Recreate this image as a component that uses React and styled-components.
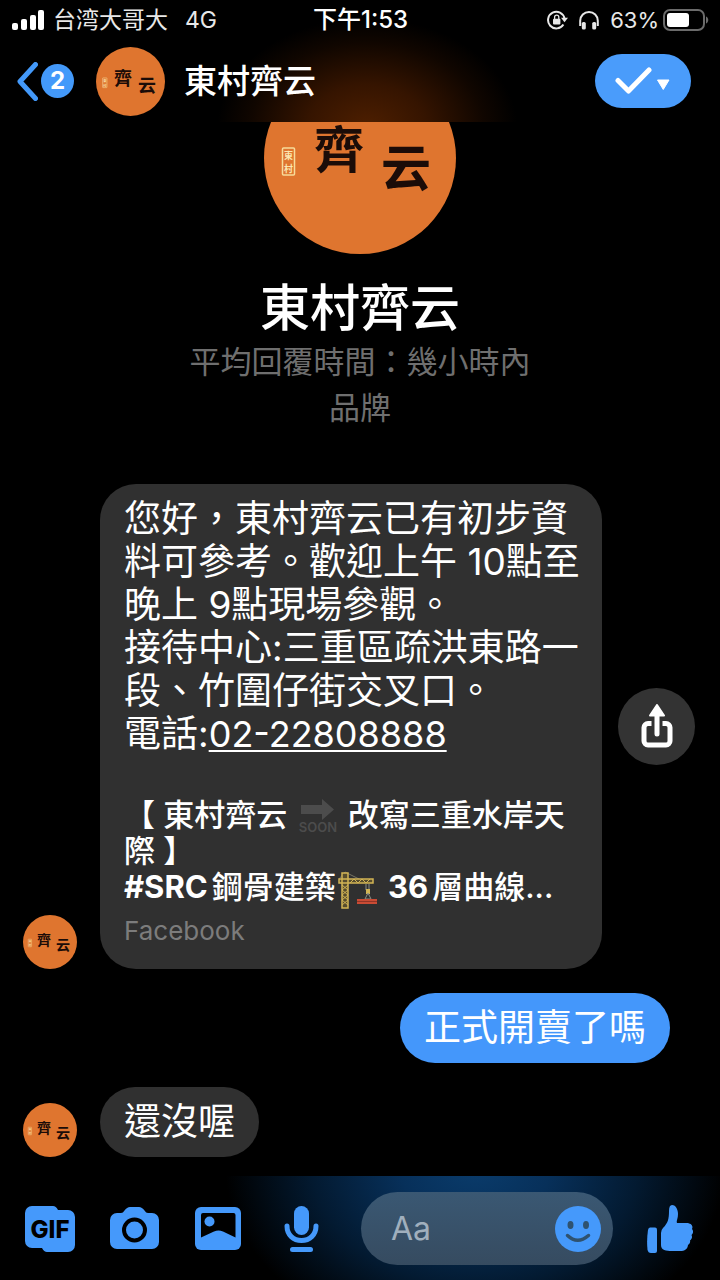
import React from "react";
import styled, { createGlobalStyle } from "styled-components";

const GlobalStyle = createGlobalStyle`
  * {
    box-sizing: border-box;
  }

  body {
    margin: 0;
    background-color: #000;
    color: #fff;
    font-family: Inter, "Noto Sans CJK TC", sans-serif;
  }

  button {
    padding: 0;
    border: none;
    background: none;
    color: inherit;
    font: inherit;
    cursor: pointer;
  }

  svg {
    display: block;
  }
`;

const Container = styled.div`
  min-height: 100vh;
  display: flex;
  flex-direction: column;
`;

const Header = styled.header`
  position: sticky;
  top: 0;
  z-index: 1;
  background: radial-gradient(ellipse 150px 110px at 51% 105%, #4e1f00 0%, #351400 40%, #100600 78%, #000 100%);
`;

const StatusBar = styled.div`
  height: 40px;
  padding: 0 11px 0 12px;
  display: grid;
  grid-template-columns: 1fr auto 1fr;
  align-items: center;
  font-size: 23px;
  line-height: 32px;
  color: #e8e8e8;
`;

const StatusGroup = styled.div`
  display: flex;
  align-items: center;
  justify-content: ${(props) => (props.$end ? "flex-end" : "flex-start")};
  gap: ${(props) => (props.$end ? "4px" : "9px")};
`;

const Network = styled.span`
  margin-left: 8px;
`;

const Time = styled.time`
  font-size: 24px;
  font-weight: 500;
  color: #fff;
`;

const Percent = styled.span`
  font-size: 22px;
`;

const StatusIcon = styled.span`
  margin-right: 7px;
`;

const NavBar = styled.div`
  height: 82px;
  padding: 0 29px 0 17px;
  display: flex;
  align-items: center;
`;

const BackButton = styled.button`
  display: flex;
  align-items: center;
  gap: 3px;
`;

const Badge = styled.span`
  width: 33px;
  height: 34px;
  border-radius: 50%;
  background-color: #4399fa;
  font-size: 24px;
  font-weight: 700;
  line-height: 34px;
`;

const PageName = styled.h1`
  flex: 1;
  margin: 0 0 0 19px;
  font-size: 33px;
  font-weight: 500;
  line-height: 44px;
`;

const NavAvatar = styled.span`
  margin-left: 22px;
`;

const DoneButton = styled.button`
  width: 96px;
  height: 54px;
  border-radius: 27px;
  background-color: #4a9cfb;
  display: flex;
  align-items: center;
  justify-content: center;
`;

const Chat = styled.main`
  flex: 1;
`;

const Profile = styled.section`
  display: flex;
  flex-direction: column;
  align-items: center;
  text-align: center;
`;

/* scrolled partly under the header */
const ProfilePicture = styled.div`
  margin-top: -60px;
`;

const ProfileName = styled.h2`
  margin: 23px 0 0;
  font-size: 50px;
  font-weight: 500;
  line-height: 62px;
`;

const ProfileInfo = styled.p`
  margin: 0;
  font-size: 31px;
  font-weight: 400;
  line-height: 46px;
  color: #6f6f6f;
`;

const Messages = styled.section`
  margin-top: 53px;
  padding: 0 25px 18px 23px;
  display: flex;
  flex-direction: column;
  gap: 24px;
`;

const Row = styled.div`
  padding-right: ${(props) => (props.$mine ? "25px" : "0")};
  display: flex;
  align-items: flex-end;
  justify-content: ${(props) => (props.$mine ? "flex-end" : "flex-start")};
`;

const Bubble = styled.div`
  flex: ${(props) => (props.$wide ? "1" : "none")};
  min-width: 0;
  margin-left: 23px;
  padding: 13px 24px 14px;
  border-radius: 36px;
  background-color: ${(props) => (props.$mine ? "#4497fb" : "#303030")};
  font-size: 37px;
  font-weight: 400;
  line-height: 43px;
`;

const Text = styled.p`
  margin: 0;
  white-space: nowrap;
`;

const Phone = styled.a`
  color: inherit;
  font-size: 36px;
  text-decoration-thickness: 2px;
  text-underline-offset: 3px;
`;

const CardTitle = styled.p`
  margin: 41px 0 0;
  font-size: 31px;
  font-weight: 500;
  line-height: 36px;
  white-space: nowrap;
`;

const Bold = styled.span`
  margin-right: 4px;
  font-weight: 700;
`;

const Emoji = styled.svg`
  display: inline-block;
  margin: -8px 2px;
  vertical-align: middle;
`;

const Source = styled.p`
  margin: 10px 0 8px;
  font-size: 26px;
  line-height: 32px;
  color: #7c7c7c;
`;

const ShareButton = styled.button`
  width: 77px;
  height: 77px;
  margin-left: 16px;
  flex: none;
  align-self: center;
  border-radius: 50%;
  background-color: #333;
  display: flex;
  align-items: center;
  justify-content: center;
`;

const Composer = styled.form`
  padding: 16px 27px 15px 25px;
  display: flex;
  align-items: center;
  gap: 34px;
  background: radial-gradient(ellipse 250px 185px at 66% -10%, #0a3c6c 0%, #07305a 30%, #031a31 65%, #000 100%);
`;

const ToolButton = styled.button`
  width: 50px;
  height: 50px;
  color: #4599fb;
  display: flex;
  align-items: center;
  justify-content: center;
`;

const LikeButton = styled(ToolButton)`
  width: 46px;
`;

const Field = styled.div`
  flex: 1;
  min-width: 0;
  height: 73px;
  padding: 0 12px 0 30px;
  border-radius: 37px;
  background: linear-gradient(#3a5873, #364b60);
  display: flex;
  align-items: center;
`;

const Input = styled.input`
  flex: 1;
  min-width: 0;
  padding: 0;
  border: none;
  outline: none;
  background: none;
  color: #fff;
  font-family: Inter, "Noto Sans CJK TC", sans-serif;
  font-size: 32px;

  &::placeholder {
    color: #a0afbd;
    opacity: 1;
  }
`;

const EmojiButton = styled(ToolButton)`
  width: 46px;
`;

const LogoText = styled.text`
  font-family: "Noto Sans CJK TC", sans-serif;
  font-weight: 700;
`;

const GifText = styled.text`
  font-family: Inter, sans-serif;
  font-size: 24px;
  font-weight: 800;
`;

const SoonText = styled.text`
  font-family: Inter, sans-serif;
  font-size: 13px;
  font-weight: 600;
`;

const Avatar = ({ size }) => (
  <svg width={size} height={size} viewBox="0 0 192 192" role="img" aria-label="東村齊云">
    <circle cx="96" cy="96" r="96" fill="#df752f" />
    <rect x="18.500" y="86" width="12" height="27" rx="1" fill="none" stroke="#f7dc9a" strokeWidth="1.500" />
    <LogoText x="20" y="97" fontSize="9" fill="#fbe6b0">東</LogoText>
    <LogoText x="20" y="110" fontSize="9" fill="#fbe6b0">村</LogoText>
    <LogoText x="50" y="106" fontSize="50" fill="#1b0c08">齊</LogoText>
    <LogoText x="117" y="124" fontSize="50" fill="#1b0c08">云</LogoText>
  </svg>
);

const SignalIcon = () => (
  <svg width="32" height="20" viewBox="0 0 32 20" fill="#fff">
    <rect x="0" y="13" width="6" height="7" rx="2" />
    <rect x="9" y="9" width="6" height="11" rx="2" />
    <rect x="18" y="5" width="6" height="15" rx="2" />
    <rect x="26" y="0" width="6" height="20" rx="2" />
  </svg>
);

const RotationLockIcon = () => (
  <svg width="21" height="20" viewBox="0 0 21 20" fill="none" stroke="#e8e8e8" strokeWidth="2">
    <path d="M17.500 8.500A8.300 8.300 0 1 0 16.400 14.500" />
    <path d="M14 7.800h7l-3.500 4.500z" fill="#e8e8e8" stroke="none" />
    <rect x="6" y="8.800" width="7.400" height="5.600" rx="1" fill="#e8e8e8" stroke="none" />
    <path d="M7.600 9V7.200a2.100 2.100 0 0 1 4.200 0V9" strokeWidth="1.300" />
  </svg>
);

const HeadphonesIcon = () => (
  <svg width="20" height="19" viewBox="0 0 20 19">
    <path d="M1.200 15V9.800a8.800 8.800 0 0 1 17.600 0V15" fill="none" stroke="#e8e8e8" strokeWidth="2" />
    <rect x="2.800" y="11" width="4" height="7.600" rx="1.600" fill="#e8e8e8" />
    <rect x="13.200" y="11" width="4" height="7.600" rx="1.600" fill="#e8e8e8" />
  </svg>
);

const BatteryIcon = () => (
  <svg width="46" height="22" viewBox="0 0 46 22">
    <rect x="1" y="1" width="40" height="20" rx="6" fill="none" stroke="#6b6b6b" strokeWidth="2" />
    <rect x="4" y="4" width="22" height="14" rx="3" fill="#fff" />
    <path d="M43 7.500c3 1.200 3 5.800 0 7z" fill="#6b6b6b" />
  </svg>
);

const BackIcon = () => (
  <svg width="21" height="39" viewBox="0 0 21 39">
    <path d="M18.500 2.500L3 19.500l15.500 17" fill="none" stroke="#4399fa" strokeWidth="5" strokeLinecap="round" strokeLinejoin="round" />
  </svg>
);

const DoneIcon = () => (
  <svg width="56" height="28" viewBox="0 0 56 28">
    <path d="M3 13.500L13.500 24 34 3" fill="none" stroke="#fff" strokeWidth="5" strokeLinecap="round" strokeLinejoin="round" />
    <path d="M42.500 13h11.500l-5.750 9.500z" fill="#fff" stroke="#fff" strokeLinejoin="round" />
  </svg>
);

const ShareIcon = () => (
  <svg width="32" height="46" viewBox="0 0 32 46">
    <path d="M10.500 19.500H7a4 4 0 0 0-4 4V37a4 4 0 0 0 4 4h18a4 4 0 0 0 4-4V23.500a4 4 0 0 0-4-4h-3.500" fill="none" stroke="#fff" strokeWidth="5" />
    <path d="M16 8v22" stroke="#fff" strokeWidth="5" strokeLinecap="round" />
    <path d="M16 1l7 10.500H9z" fill="#fff" stroke="#fff" strokeWidth="2" strokeLinejoin="round" />
  </svg>
);

const SoonEmoji = () => (
  <Emoji width="40" height="38" viewBox="0 0 40 38" fill="#4c4c4c" role="img" aria-label="soon">
    <path d="M3 6h21V0l12 10.500L24 21v-6H3z" />
    <SoonText x="20" y="33" textAnchor="middle">SOON</SoonText>
  </Emoji>
);

const CraneEmoji = () => (
  <Emoji width="40" height="38" viewBox="0 0 40 38" role="img" aria-label="building crane">
    <path d="M1 8L7 1l14 7" fill="none" stroke="#777464" />
    <path d="M4 37V2h6v35zM1 8h34v4H1z" fill="#574c2d" stroke="#d2b454" strokeWidth="1.500" />
    <path d="M4 14l6 5-6 5 6 5-6 5M10 14l-6 5 6 5-6 5 6 5M12 12l4-4 4 4 4-4 4 4 4-4" fill="none" stroke="#d2b454" />
    <path d="M28 13v6M31 13v6" stroke="#8c8e85" />
    <path d="M28 18h4v5h-4z" fill="#d2b454" />
    <path d="M30 22l-3 6h6z" fill="none" stroke="#8c8e85" />
    <rect x="19" y="28" width="20" height="5" fill="#c94b34" />
    <path d="M19 30.500h20" stroke="#913426" />
  </Emoji>
);

const GifIcon = () => (
  <svg width="50" height="46" viewBox="0 0 50 46">
    <path d="M7 0h21q3 0 5 4h10a7 7 0 0 1 7 7v28a7 7 0 0 1-7 7H22q-3 0-5-4H7a7 7 0 0 1-7-7V7a7 7 0 0 1 7-7z" fill="currentColor" />
    <GifText x="25" y="32" textAnchor="middle" fill="#000">GIF</GifText>
  </svg>
);

const CameraIcon = () => (
  <svg width="49" height="43" viewBox="0 0 49 43">
    <path d="M7 6h4q2 0 3.500-2.500Q17 0 20 0h9q3 0 5.500 3.500Q36 6 38 6h4a7 7 0 0 1 7 7v22a7 7 0 0 1-7 7H7a7 7 0 0 1-7-7V13a7 7 0 0 1 7-7z" fill="currentColor" />
    <circle cx="24.500" cy="23" r="10.500" fill="none" stroke="#000" strokeWidth="4" />
  </svg>
);

const PhotoIcon = () => (
  <svg width="46" height="43" viewBox="0 0 46 43">
    <rect width="46" height="43" rx="6" fill="currentColor" />
    <path d="M8 6h30.500a2 2 0 0 1 2 2v22.500L28 24.500q-4.500-2-9 0L6 30.500V8a2 2 0 0 1 2-2z" fill="#000" />
    <circle cx="14.500" cy="14.500" r="5" fill="currentColor" />
  </svg>
);

const MicIcon = () => (
  <svg width="36" height="46" viewBox="0 0 36 46" fill="currentColor">
    <rect x="10" y="0" width="15" height="29" rx="7.500" />
    <path d="M3 20c0 9 6.500 14.500 14.500 14.500S32 29 32 20" fill="none" stroke="currentColor" strokeWidth="5" strokeLinecap="round" />
    <rect x="6" y="41" width="23" height="5" rx="2.500" />
  </svg>
);

const SmileIcon = () => (
  <svg width="46" height="46" viewBox="0 0 46 46">
    <circle cx="23" cy="23" r="23" fill="currentColor" />
    <ellipse cx="15.500" cy="19" rx="3" ry="4" fill="#2f526f" />
    <ellipse cx="31" cy="19" rx="3" ry="4" fill="#2f526f" />
    <path d="M12.500 29.500q10 9.500 21 0" fill="none" stroke="#2f526f" strokeWidth="3.500" strokeLinecap="round" />
  </svg>
);

const LikeIcon = () => (
  <svg width="46" height="48" viewBox="0 0 46 48" fill="currentColor">
    <path d="M3 22.500h5q2 0 2 2V46q0 2-2 2H4q-3 0-3.500-3.500-1-9 .5-19.500.4-2.500 2-2.500z" />
    <path d="M14 28q0-3 2-5c5-5 6-9 6-17 0-4 1-6 3-6 4 0 6 5 6 9 0 5-2 7-1 9h9c5 0 7.500 2.500 6 6 1.500 2 1.500 4-.5 6 1 2 .5 4-1.500 5.500 .5 2-.5 3.500-2 4.500-.500 4-3 6-8 6h-8c-6 0-11-.5-11-6z" />
  </svg>
);

const App = () => {
  return (
    <>
      <GlobalStyle />
      <Container>
        <Header>
          <StatusBar>
            <StatusGroup>
              <SignalIcon />
              <span>台湾大哥大</span>
              <Network>4G</Network>
            </StatusGroup>
            <Time>下午1:53</Time>
            <StatusGroup $end>
              <StatusIcon><RotationLockIcon /></StatusIcon>
              <StatusIcon><HeadphonesIcon /></StatusIcon>
              <Percent>63%</Percent>
              <BatteryIcon />
            </StatusGroup>
          </StatusBar>
          <NavBar>
            <BackButton type="button" aria-label="返回">
              <BackIcon />
              <Badge>2</Badge>
            </BackButton>
            <NavAvatar><Avatar size={69} /></NavAvatar>
            <PageName>東村齊云</PageName>
            <DoneButton type="button" aria-label="完成"><DoneIcon /></DoneButton>
          </NavBar>
        </Header>

        <Chat>
          <Profile>
            <ProfilePicture><Avatar size={192} /></ProfilePicture>
            <ProfileName>東村齊云</ProfileName>
            <ProfileInfo>平均回覆時間：幾小時內</ProfileInfo>
            <ProfileInfo>品牌</ProfileInfo>
          </Profile>

          <Messages>
            <Row>
              <Avatar size={54} />
              <Bubble $wide>
                <Text>
                  您好，東村齊云已有初步資<br />
                  料可參考。歡迎上午 10點至<br />
                  晚上 9點現場參觀。<br />
                  接待中心:三重區疏洪東路一<br />
                  段、竹圍仔街交叉口。<br />
                  電話:<Phone href="tel:02-22808888">02-22808888</Phone>
                </Text>
                <CardTitle>
                  【 東村齊云 <SoonEmoji /> 改寫三重水岸天<br />
                  際 】<br />
                  <Bold>#SRC</Bold>鋼骨建築<CraneEmoji /> <Bold>36</Bold>層曲線...
                </CardTitle>
                <Source>Facebook</Source>
              </Bubble>
              <ShareButton type="button" aria-label="分享"><ShareIcon /></ShareButton>
            </Row>
            <Row $mine>
              <Bubble $mine>
                <Text>正式開賣了嗎</Text>
              </Bubble>
            </Row>
            <Row>
              <Avatar size={54} />
              <Bubble>
                <Text>還沒喔</Text>
              </Bubble>
            </Row>
          </Messages>
        </Chat>

        <Composer>
          <ToolButton type="button" aria-label="GIF"><GifIcon /></ToolButton>
          <ToolButton type="button" aria-label="相機"><CameraIcon /></ToolButton>
          <ToolButton type="button" aria-label="相片"><PhotoIcon /></ToolButton>
          <ToolButton type="button" aria-label="語音"><MicIcon /></ToolButton>
          <Field>
            <Input type="text" placeholder="Aa" aria-label="訊息" />
            <EmojiButton type="button" aria-label="表情符號"><SmileIcon /></EmojiButton>
          </Field>
          <LikeButton type="button" aria-label="讚"><LikeIcon /></LikeButton>
        </Composer>
      </Container>
    </>
  );
};

export default App;
